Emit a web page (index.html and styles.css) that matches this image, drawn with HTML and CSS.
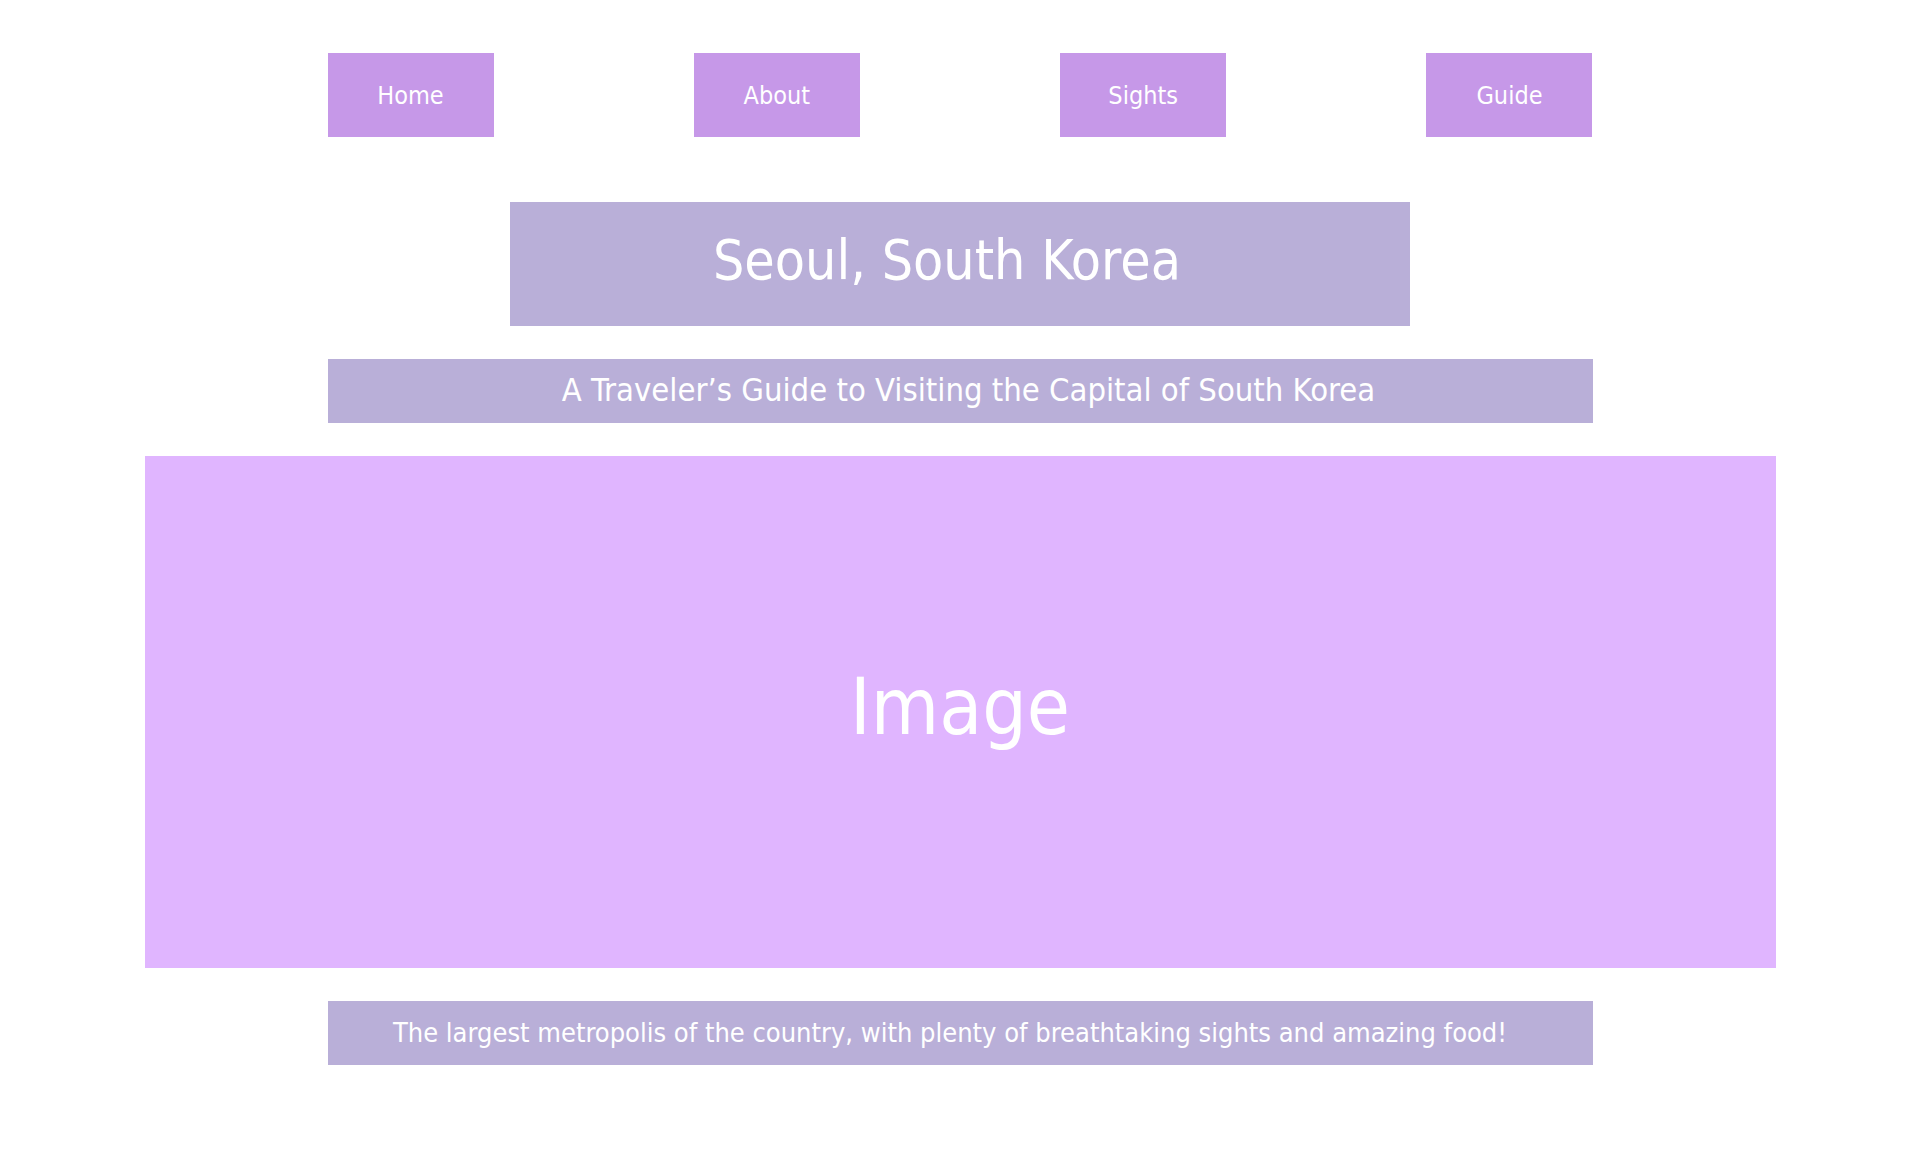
FILE: index.html
```html
<!DOCTYPE html>
<html lang="en">
<head>
<meta charset="utf-8">
<title>Seoul, South Korea</title>
<link rel="stylesheet" href="styles.css">
</head>
<body>
<nav class="nav">
  <a class="nav-btn" href="#">Home</a>
  <a class="nav-btn" href="#">About</a>
  <a class="nav-btn" href="#">Sights</a>
  <a class="nav-btn" href="#">Guide</a>
</nav>
<h1 class="title">Seoul, South Korea</h1>
<h2 class="subtitle">A Traveler’s Guide to Visiting the Capital of South Korea</h2>
<div class="hero">Image</div>
<p class="caption">The largest metropolis of the country, with plenty of breathtaking sights and amazing food!</p>
</body>
</html>
```
FILE: styles.css
```css
html, body {
  margin: 0;
  padding: 0;
  background: #ffffff;
}
body {
  font-family: "DejaVu Sans Condensed", "DejaVu Sans", sans-serif;
  font-stretch: condensed;
  color: #ffffff;
  display: flex;
  flex-direction: column;
  align-items: center;
}
.nav {
  width: 1265px;
  margin-top: 53px;
  display: flex;
  justify-content: space-between;
}
.nav-btn {
  width: 166px;
  height: 84px;
  background: #c698e8;
  color: #ffffff;
  text-decoration: none;
  font-size: 25px;
  display: flex;
  align-items: center;
  justify-content: center;
}
.title {
  box-sizing: border-box;
  width: 900px;
  height: 124px;
  margin: 65px 0 0;
  padding: 0 26px 8px 0;
  background: #b9afd8;
  font-weight: normal;
  font-size: 55px;
  display: flex;
  align-items: center;
  justify-content: center;
}
.subtitle {
  box-sizing: border-box;
  width: 1265px;
  height: 64px;
  margin: 33px 0 0;
  padding: 0 0 2px 17px;
  background: #b9afd8;
  font-weight: normal;
  font-size: 32.5px;
  display: flex;
  align-items: center;
  justify-content: center;
}
.hero {
  box-sizing: border-box;
  width: 1631px;
  height: 512px;
  margin-top: 33px;
  padding-bottom: 10px;
  background: #e0b5ff;
  font-size: 78px;
  display: flex;
  align-items: center;
  justify-content: center;
}
.caption {
  box-sizing: border-box;
  width: 1265px;
  height: 64px;
  margin: 33px 0 0;
  padding: 0 20px 2px 0;
  background: #b9afd8;
  font-size: 27px;
  display: flex;
  align-items: center;
  justify-content: center;
}
```
